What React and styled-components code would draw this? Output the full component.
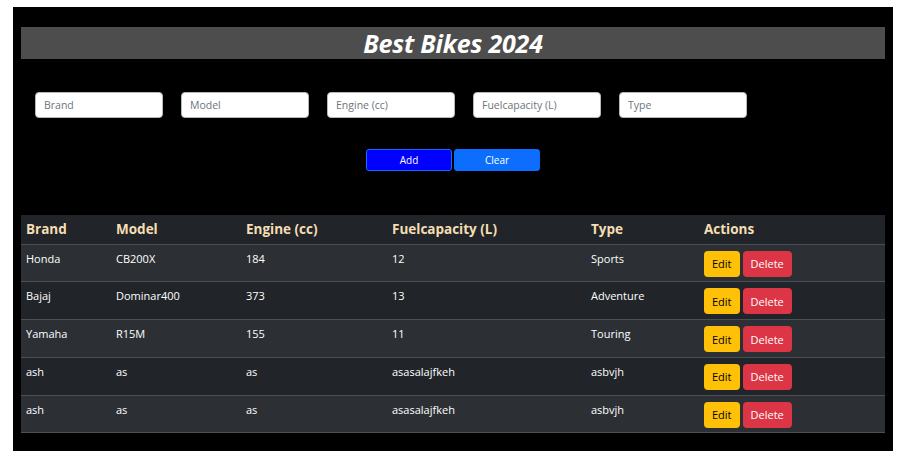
import React from "react";
import styled, { createGlobalStyle } from "styled-components";

const GlobalStyle = createGlobalStyle`
  body{
    margin: 0;
    background: #fff;
    font-family: "Open Sans", "Noto Sans", sans-serif;
  }
`
const Panel = styled.div`
  margin: 7px 8px 0 13px;
  width: 880px;
  height: 444px;
  box-sizing: border-box;
  background: #000;
  padding: 20px 8px 0 8px;
`
const TitleBar = styled.h1`
  margin: 0;
  height: 32px;
  background: #4d4d4d;
  color: #fff;
  font-size: 25px;
  font-weight: 700;
  font-style: italic;
  text-align: center;
  line-height: 32px;
  letter-spacing: -0.2px;
`
const Form = styled.div`
  display: flex;
  gap: 18px;
  padding: 33px 0 0 14px;
`
const Input = styled.input`
  width: 128px;
  height: 26px;
  box-sizing: border-box;
  border: 1px solid #b8b8b8;
  border-radius: 4px;
  padding: 0 8px;
  font-family: inherit;
  font-size: 10.5px;
  outline: none;
  &::placeholder{
    color: #6c757d;
  }
`
const Buttons = styled.div`
  display: flex;
  justify-content: center;
  gap: 2px;
  margin-top: 31px;
`
const FormButton = styled.button`
  width: 86px;
  height: 22px;
  border-radius: 3px;
  border: 1px solid #0d6efd;
  background: ${(p) => (p.$primary ? "#0000ff" : "#0d6efd")};
  color: #fff;
  font-family: inherit;
  font-size: 10px;
  padding: 0;
  cursor: pointer;
`
const Table = styled.table`
  margin-top: 44px;
  width: 864px;
  border-collapse: collapse;
  table-layout: fixed;
  th, td{
    text-align: left;
    vertical-align: top;
    border-bottom: 1px solid #4b4f53;
    padding: 0 5px;
    box-sizing: border-box;
  }
  th:nth-child(1){ width: 90px; }
  th:nth-child(2){ width: 130px; }
  th:nth-child(3){ width: 146px; }
  th:nth-child(4){ width: 199px; }
  th:nth-child(5){ width: 113px; }
  th:nth-child(6){ width: 186px; }
  th{
    background: #212529;
    color: #f5deb3;
    font-size: 13.5px;
    font-weight: 700;
    height: 29px;
    line-height: 20px;
    padding-top: 4px;
  }
  td{
    color: #fff;
    font-size: 11px;
    line-height: 16px;
    height: 37.8px;
    padding-top: 6px;
  }
  tbody tr:nth-child(odd) td{
    background: #2c3034;
  }
  tbody tr:nth-child(even) td{
    background: #212529;
  }
`
const ActionButton = styled.button`
  height: 26px;
  margin-right: 3px;
  border: none;
  border-radius: 4px;
  padding: 0 8px;
  font-family: inherit;
  font-size: 11px;
  background: ${(p) => (p.$danger ? "#dc3545" : "#ffc107")};
  color: ${(p) => (p.$danger ? "#fff" : "#000")};
  cursor: pointer;
`

const fields = ["Brand", "Model", "Engine (cc)", "Fuelcapacity (L)", "Type"];

const bikes = [
  { brand: "Honda", model: "CB200X", engine: "184", fuel: "12", type: "Sports" },
  { brand: "Bajaj", model: "Dominar400", engine: "373", fuel: "13", type: "Adventure" },
  { brand: "Yamaha", model: "R15M", engine: "155", fuel: "11", type: "Touring" },
  { brand: "ash", model: "as", engine: "as", fuel: "asasalajfkeh", type: "asbvjh" },
  { brand: "ash", model: "as", engine: "as", fuel: "asasalajfkeh", type: "asbvjh" },
];

const App = () => {
  return (
    <>
      <GlobalStyle />
      <Panel>
        <TitleBar>Best Bikes 2024</TitleBar>
        <Form>
          {fields.map((f) => (
            <Input key={f} placeholder={f} />
          ))}
        </Form>
        <Buttons>
          <FormButton $primary>Add</FormButton>
          <FormButton>Clear</FormButton>
        </Buttons>
        <Table>
          <thead>
            <tr>
              {fields.map((f) => (
                <th key={f}>{f}</th>
              ))}
              <th>Actions</th>
            </tr>
          </thead>
          <tbody>
            {bikes.map((item, index) => (
              <tr key={index}>
                <td>{item.brand}</td>
                <td>{item.model}</td>
                <td>{item.engine}</td>
                <td>{item.fuel}</td>
                <td>{item.type}</td>
                <td>
                  <ActionButton>Edit</ActionButton>
                  <ActionButton $danger>Delete</ActionButton>
                </td>
              </tr>
            ))}
          </tbody>
        </Table>
      </Panel>
    </>
  );
};

export default App;
